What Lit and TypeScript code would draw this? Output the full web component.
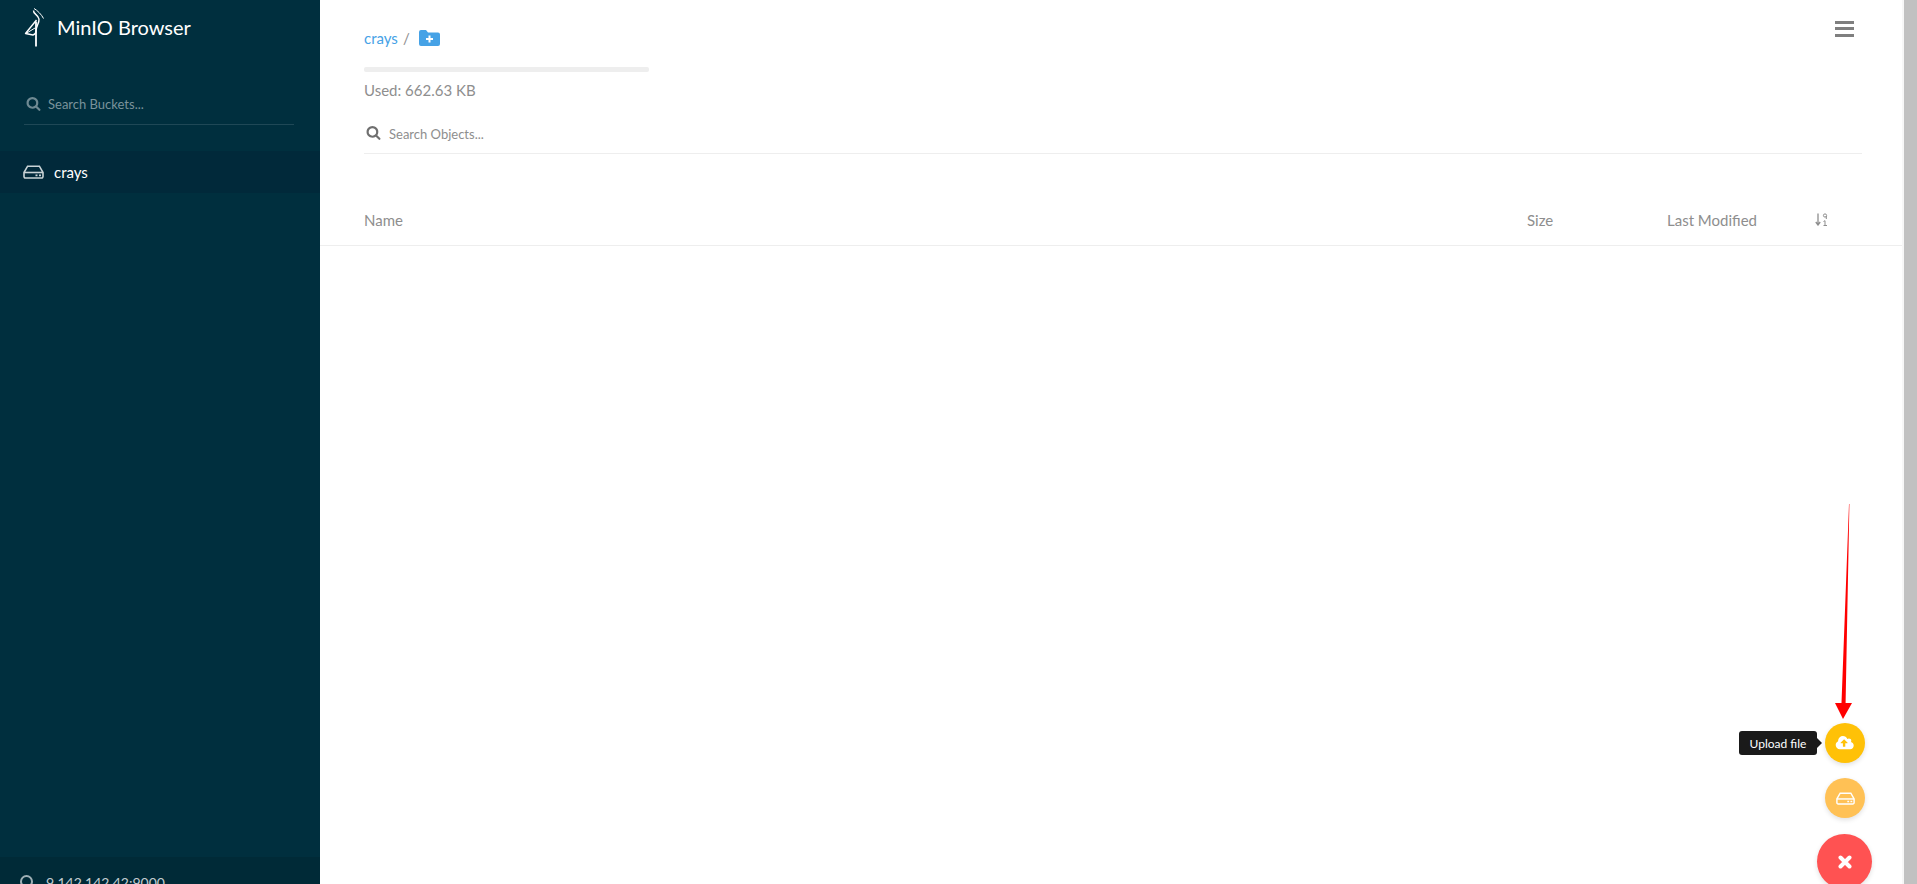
import { LitElement, html, css, svg } from "lit";
import { customElement } from "lit/decorators.js";

const search = svg`<path d="M1216 832q0-185-131.500-316.500t-316.500-131.500-316.500 131.500-131.500 316.500 131.500 316.500 316.500 131.500 316.500-131.500 131.500-316.500zm512 832q0 52-38 90t-90 38q-54 0-90-38l-343-342q-179 124-399 124-143 0-273.500-55.500t-225-150-150-225-55.500-273.500 55.500-273.500 150-225 225-150 273.500-55.500 273.500 55.500 225 150 150 225 55.500 273.500q0 220-124 399l343 343q37 37 37 90z"/>`;
const searchIcon = (c: string) => html`<svg class=${c} viewBox="0 128 1792 1792" fill="currentColor">${search}</svg>`;
const hdd = (c: string) => html`<svg class=${c} viewBox="0 0 21 14" fill="none" stroke="currentColor" stroke-width="1.6"><path d="M1 7.5 4.6 1.2h11.800L20 7.500v4.100a1.400 1.400 0 0 1-1.400 1.400H2.400A1.400 1.400 0 0 1 1 11.600z"/><path d="M1 7.500h19"/><path d="M12.500 10.300h2M16 10.300h2" stroke-width="1.800"/></svg>`;

@customElement("app-root")
export class AppRoot extends LitElement {
  static styles = css`
    :host { display: block; height: 884px; overflow: hidden; font-family: Lato, "Open Sans", sans-serif; position: relative; background: #fff; }
    * { box-sizing: border-box; }
    .page { display: grid; grid-template-columns: 320px 1fr 13px; height: 884px; }
    .side { background: #002f3e; color: #fff; display: flex; flex-direction: column; height: 884px; overflow: hidden; }
    .brand { display: flex; align-items: center; height: 54px; padding: 0 0 0 24px; gap: 12px; margin-bottom: 0; }
    .logo { width: 21px; height: 40px; margin-top: 0; flex: none; position: relative; top: 0; }
    .brand-row { height: 54px; padding-top: 0; }
    .title { font-size: 20px; color: #fff; line-height: 54px; }
    .sfield { margin: 34px 26px 0 24px; height: 37px; border-bottom: 1px solid #1f4856; display: flex; align-items: center; gap: 7px; padding: 0 0 4px 2px; color: #6f8a93; }
    .sicon { width: 15px; height: 15px; flex: none; }
    .sfield span { font-size: 13px; color: #7a939b; }
    .bucket { margin-top: 26px; height: 42px; background: #01293a; display: flex; align-items: center; padding-left: 23px; gap: 10px; font-size: 15px; color: #fff; }
    .bicon { width: 21px; height: 14px; color: #c9d3d6; flex: none; }
    .grow { flex: 1; }
    .foot { height: 27px; padding: 18px 0 0 20px; background: #002a37; display: flex; gap: 13px; align-items: flex-start; font-size: 14px; color: #c2ccd0; line-height: 16px; }
    .ficon { width: 13px; height: 13px; flex: none; border: 2px solid #9fb0b6; border-radius: 50%; }
    .main { min-width: 0; border-right: 2px solid #f7f7f7; display: flex; flex-direction: column; }
    .top { padding: 0 40px 0 44px; }
    .crumbrow { display: flex; align-items: center; height: 37px; margin-top: 19px; justify-content: space-between; }
    .crumb { display: flex; align-items: center; font-size: 15px; color: #46a2e6; position: relative; }
    .crumb i { font-style: normal; color: #8e8e8e; margin-left: 5px; margin-right: 9px; }
    .folder { width: 21px; height: 16px; }
    .bars { width: 19px; height: 16px; display: flex; flex-direction: column; justify-content: space-between; margin-right: 8px; margin-top: -18px; }
    .bars b { display: block; height: 3px; background: #7f7f7f; }
    .track { width: 285px; height: 5px; background: #eee; border-radius: 2px; margin-top: 11px; }
    .used { font-size: 15px; color: #8e8e8e; line-height: 20px; margin-top: 8px; }
    .osearch { margin-top: 18px; height: 36px; border-bottom: 1px solid #eee; display: flex; align-items: center; gap: 8px; padding: 0 0 4px 2px; color: #6f6f6f; }
    .osearch span { font-size: 13px; color: #8e8e8e; }
    .head { margin-top: 40px; height: 52px; border-bottom: 1px solid #eee; display: grid; grid-template-columns: 1163px 140px 148px auto; align-items: center; padding-left: 44px; font-size: 15px; color: #8e8e8e; }
    .sort { width: 13px; height: 13px; color: #8e8e8e; }
    .scroll { background: #c1c1c1; }
    .arrow { position: absolute; left: 1830px; top: 500px; width: 26px; height: 222px; }
    .fab { position: absolute; border-radius: 50%; display: flex; align-items: center; justify-content: center; color: #fff; box-shadow: 0 2px 5px rgba(0,0,0,.12); }
    .up { left: 1825px; top: 723px; width: 40px; height: 40px; background: #ffc107; }
    .mk { left: 1825px; top: 778px; width: 40px; height: 40px; background: #ffc155; }
    .close { left: 1817px; top: 834px; width: 55px; height: 55px; background: #ff5252; }
    .tip { position: absolute; left: 1739px; top: 731px; width: 78px; height: 24px; background: #1a1a1a; color: #fff; border-radius: 3px; font-size: 12px; display: flex; align-items: center; justify-content: center; }
    .tip::after { content: ""; position: absolute; right: -5px; top: 7px; border-left: 5px solid #1a1a1a; border-top: 5px solid transparent; border-bottom: 5px solid transparent; }
    .cloud { width: 20px; height: 15px; }
    .fhdd { width: 19px; height: 13px; }
    .x { width: 14px; height: 14px; }
  `;

  render() {
    return html`
      <div class="page">
        <aside class="side">
          <div class="brand">
            <svg class="logo" viewBox="0 0 21 40" fill="none" stroke="#fff" stroke-width="1.4">
              <path d="M10 1.500C13 3 18 8 19.500 11.500" stroke-width="1"/>
              <path d="M9.500 3.500C9 7 14.500 8 15 12C15.500 16 12 19 12 24C12 26 11 27.500 9 28L1.500 26.500L12.500 13" stroke-linejoin="round"/>
              <path d="M12 14.500V39.500" stroke-width="1.800"/>
              <path d="M2 26.500 11 21" stroke-width="1"/>
            </svg>
            <span class="title">MinIO Browser</span>
          </div>
          <div class="sfield">${searchIcon("sicon")}<span>Search Buckets...</span></div>
          <div class="bucket">${hdd("bicon")}<span>crays</span></div>
          <div class="grow"></div>
          <div class="foot"><div class="ficon"></div><span>9.142.142.42:9000</span></div>
        </aside>
        <main class="main">
          <div class="top">
            <div class="crumbrow">
              <div class="crumb"><span>crays</span><i>/</i>
                <svg class="folder" viewBox="0 0 21 16"><path fill="#46a2e6" d="M0 2a2 2 0 0 1 2-2h5l2 2.500h10a2 2 0 0 1 2 2V14a2 2 0 0 1-2 2H2a2 2 0 0 1-2-2z"/><path stroke="#fff" stroke-width="2" d="M10.500 5.500v7M7 9h7"/></svg>
              </div>
              <div class="bars"><b></b><b></b><b></b></div>
            </div>
            <div class="track"></div>
            <div class="used">Used: 662.63 KB</div>
            <div class="osearch">${searchIcon("sicon")}<span>Search Objects...</span></div>
          </div>
          <div class="head">
            <span>Name</span><span>Size</span><span>Last Modified</span>
            <svg class="sort" viewBox="0 0 13 13" fill="none" stroke="currentColor"><path d="M3 .5v11M.8 9l2.200 3 2.200-3" stroke-width="1.300"/><circle cx="10" cy="2.500" r="1.600"/><path d="M11.300 3v3M8.500 8.500l1.500-.8v4.600M8.500 12.500h3.500"/></svg>
          </div>
        </main>
        <div class="scroll"></div>
      </div>
      <svg class="arrow" viewBox="0 0 26 222"><path fill="#f00" d="M19 4 19.400 4 15.600 203 22 203 13 219 5 203 11.500 203z"/></svg>
      <div class="tip">Upload file</div>
      <div class="fab up"><svg class="cloud" viewBox="0 0 1920 1600" fill="currentColor"><path d="M1216 864q0-14-9-23l-352-352q-9-9-23-9t-23 9l-351 351q-10 12-10 24 0 14 9 23t23 9h224v352q0 13 9.500 22.500t22.500 9.500h192q13 0 22.500-9.500t9.500-22.500v-352h224q13 0 22.500-9.500t9.500-22.500zm640 288q0 159-112.500 271.500t-271.500 112.500h-1088q-185 0-316.500-131.500t-131.500-316.500q0-130 70-240t188-165q-2-30-2-43 0-212 150-362t362-150q156 0 285.500 87t188.500 231q71-62 166-62 106 0 181 75t75 181q0 76-41 138 130 31 213.500 135.500t83.500 238.500z" transform="translate(32 -128)"/></svg></div>
      <div class="fab mk">${hdd("fhdd")}</div>
      <div class="fab close"><svg class="x" viewBox="0 0 14 14" stroke="#fff" stroke-width="4" stroke-linecap="round"><path d="M2.500 2.500l9 9M11.500 2.500l-9 9"/></svg></div>
    `;
  }
}
